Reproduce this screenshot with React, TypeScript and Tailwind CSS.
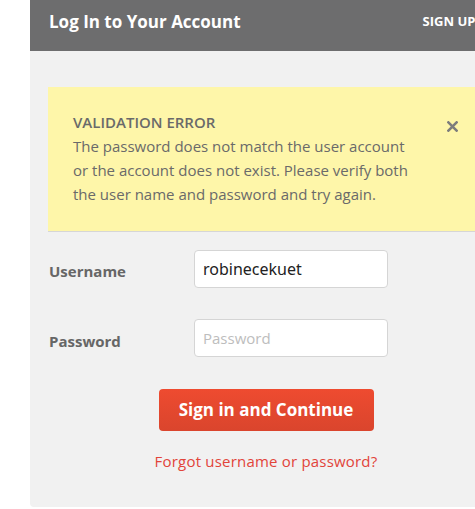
import React from 'react';

const font = { fontFamily: '"Open Sans", "Noto Sans", sans-serif' };

export default function App() {
  return (
    <div className="w-[475px] h-[509px] overflow-hidden bg-white" style={font}>
      <div className="ml-[30px] w-[472px] h-[507px] bg-[#f1f1f1] rounded-bl-[4px] flex flex-col">
        {/* header */}
        <div className="h-[51px] bg-[#6d6d6e] flex items-center pl-[19px] pb-[8px] text-white">
          <h1 className="text-[17px] font-bold">Log In to Your Account</h1>
          <span className="ml-[182px] text-[13px] font-bold whitespace-nowrap">SIGN UP</span>
        </div>

        {/* validation error */}
        <div className="mt-[36px] ml-[18px] w-[436px] bg-[#fef6a9] border-b border-[#d6d6d6] pl-[25px] pr-[26px] pt-[23px] pb-[25px] flex text-[#6a6a6a]">
          <div className="w-[345px] text-[15px] leading-[24px]">
            <div className="font-semibold">VALIDATION ERROR</div>
            <p>
              The password does not match the user account or the account does not exist. Please verify both
              the user name and password and try again.
            </p>
          </div>
          <button className="ml-auto mt-[10px] h-[12px] text-[#7d7d7d]">
            <svg width="11" height="11" viewBox="0 0 12 12" className="block">
              <path d="M1.5 1.5 L10.5 10.5 M10.5 1.5 L1.5 10.5" stroke="currentColor" strokeWidth="2.8" strokeLinecap="square" />
            </svg>
          </button>
        </div>

        {/* form */}
        <div className="mt-[18px] pl-[19px] flex flex-col gap-[31px]">
          <div className="flex items-center">
            <label className="w-[145px] pt-[5px] text-[15px] font-bold text-[#666]">Username</label>
            <input
              defaultValue="robinecekuet"
              className="w-[194px] h-[38px] bg-white border border-[#d5d5d5] rounded-[4px] px-[8px] text-[16px] text-[#222] outline-none"
              style={{ fontFamily: '"Noto Sans", sans-serif' }}
            />
          </div>
          <div className="flex items-center">
            <label className="w-[145px] pt-[7px] text-[15px] font-bold text-[#666]">Password</label>
            <input
              type="password"
              placeholder="Password"
              className="w-[194px] h-[38px] bg-white border border-[#d5d5d5] rounded-[4px] px-[8px] text-[15px] placeholder:text-[#bdbdbd] outline-none"
            />
          </div>
        </div>

        <div className="mt-[32px] flex flex-col items-center">
          <button className="w-[215px] h-[42px] rounded-[4px] bg-gradient-to-b from-[#ee4b30] to-[#da452d] text-white text-[17px] font-bold">
            Sign in and Continue
          </button>
          <a href="#" className="mt-[19px] text-[15px] tracking-[0.2px] text-[#e2443a]">
            Forgot username or password?
          </a>
        </div>
      </div>
    </div>
  );
}
